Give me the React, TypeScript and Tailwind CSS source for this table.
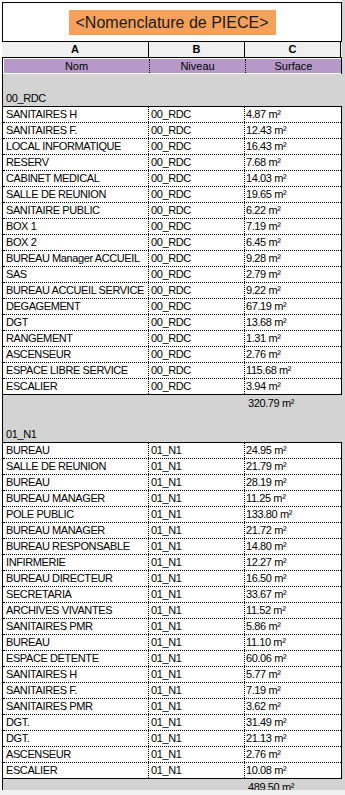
const rdc: [string, string][] = [
  ["SANITAIRES H", "4.87"],
  ["SANITAIRES F.", "12.43"],
  ["LOCAL INFORMATIQUE", "16.43"],
  ["RESERV", "7.68"],
  ["CABINET MEDICAL", "14.03"],
  ["SALLE DE REUNION", "19.65"],
  ["SANITAIRE PUBLIC", "6.22"],
  ["BOX 1", "7.19"],
  ["BOX 2", "6.45"],
  ["BUREAU Manager ACCUEIL", "9.28"],
  ["SAS", "2.79"],
  ["BUREAU ACCUEIL SERVICE", "9.22"],
  ["DEGAGEMENT", "67.19"],
  ["DGT", "13.68"],
  ["RANGEMENT", "1.31"],
  ["ASCENSEUR", "2.76"],
  ["ESPACE LIBRE SERVICE", "115.68"],
  ["ESCALIER", "3.94"],
];

const n1: [string, string][] = [
  ["BUREAU", "24.95"],
  ["SALLE DE REUNION", "21.79"],
  ["BUREAU", "28.19"],
  ["BUREAU MANAGER", "11.25"],
  ["POLE PUBLIC", "133.80"],
  ["BUREAU MANAGER", "21.72"],
  ["BUREAU RESPONSABLE", "14.80"],
  ["INFIRMERIE", "12.27"],
  ["BUREAU DIRECTEUR", "16.50"],
  ["SECRETARIA", "33.67"],
  ["ARCHIVES VIVANTES", "11.52"],
  ["SANITAIRES PMR", "5.86"],
  ["BUREAU", "11.10"],
  ["ESPACE DETENTE", "60.06"],
  ["SANITAIRES H", "5.77"],
  ["SANITAIRES F.", "7.19"],
  ["SANITAIRES PMR", "3.62"],
  ["DGT.", "31.49"],
  ["DGT.", "21.13"],
  ["ASCENSEUR", "2.76"],
  ["ESCALIER", "10.08"],
];

function Block({ niveau, rows }: { niveau: string; rows: [string, string][] }) {
  return <div className="border-t border-x border-black bg-white">
    {rows.map(([nom, surface], i) => {
      const last = i == rows.length - 1;
      return <div
        key={i}
        className={`grid grid-cols-[146px_96px_96px] h-4 leading-[15px] ${last ? "border-b border-solid border-black" : "border-b border-dotted border-black"}`}
      >
        <div className="border-r border-dotted border-black pl-[3px] whitespace-nowrap overflow-hidden">{nom}</div>
        <div className="border-r border-dotted border-black pl-[2px]">{niveau}</div>
        <div className="pl-[1px]">{surface} m²</div>
      </div>
    })}
  </div>
}

function GroupLabel({ label, blank = 16 }: { label: string; blank?: number }) {
  return <div className="border-l border-black bg-[#d3d3d3]">
    <div className={blank == 16 ? "h-4" : "h-[15px]"} />
    <div className="h-4 leading-4 pl-[3px]">{label}</div>
  </div>
}

function Total({ value }: { value: string }) {
  return <div className="grid grid-cols-[147px_96px_95px] h-4 leading-4 border-l border-black bg-[#d3d3d3]">
    <div />
    <div />
    <div className="pl-[2px]">{value} m²</div>
  </div>
}

export default function App() {
  return <div className="w-[345px] h-[795px] bg-[#f0f0f0] overflow-hidden text-[11px] tracking-[-0.4px] text-black" style={{ fontFamily: '"Liberation Sans", Arial, sans-serif' }}>
    <div className="h-[790px] overflow-hidden flex items-start bg-[#d3d3d3]">
      <div className="w-[2px] h-full bg-white" />

      <div className="w-[340px] shrink-0 bg-white">
        <div className="h-[2px]" />

        {/* title */}
        <div className="h-[40px] border border-black flex justify-center pt-[7px]">
          <div className="w-[207px] h-[25px] bg-[#f5a15b] flex items-center justify-center text-[16px] tracking-normal text-[#1a1a1a]">
            &lt;Nomenclature de PIECE&gt;
          </div>
        </div>

        {/* column letters */}
        <div className="grid grid-cols-[147px_96px_96px] h-4 leading-[15px] bg-[#f0f0f0] border-b border-black font-bold tracking-normal text-center">
          <div className="border-r border-black">A</div>
          <div className="border-r border-black">B</div>
          <div className="border-r border-black">C</div>
        </div>

        {/* headers */}
        <div className="h-4 border-l border-r border-black bg-white py-[1px] pl-[1px]">
          <div className="grid grid-cols-[146px_96px_95px] h-[14px] leading-[14px] bg-[#b699c9] text-center tracking-normal">
            <div className="border-r border-dotted border-black">Nom</div>
            <div className="border-r border-dotted border-black">Niveau</div>
            <div>Surface</div>
          </div>
        </div>

        <GroupLabel label="00_RDC" />
        <Block niveau="00_RDC" rows={rdc} />
        <Total value="320.79" />
        <GroupLabel label="01_N1" blank={15} />
        <Block niveau="01_N1" rows={n1} />
        <Total value="489.50" />
      </div>

      <div className="flex-1 h-full bg-[#d3d3d3]" />
    </div>
  </div>
}
